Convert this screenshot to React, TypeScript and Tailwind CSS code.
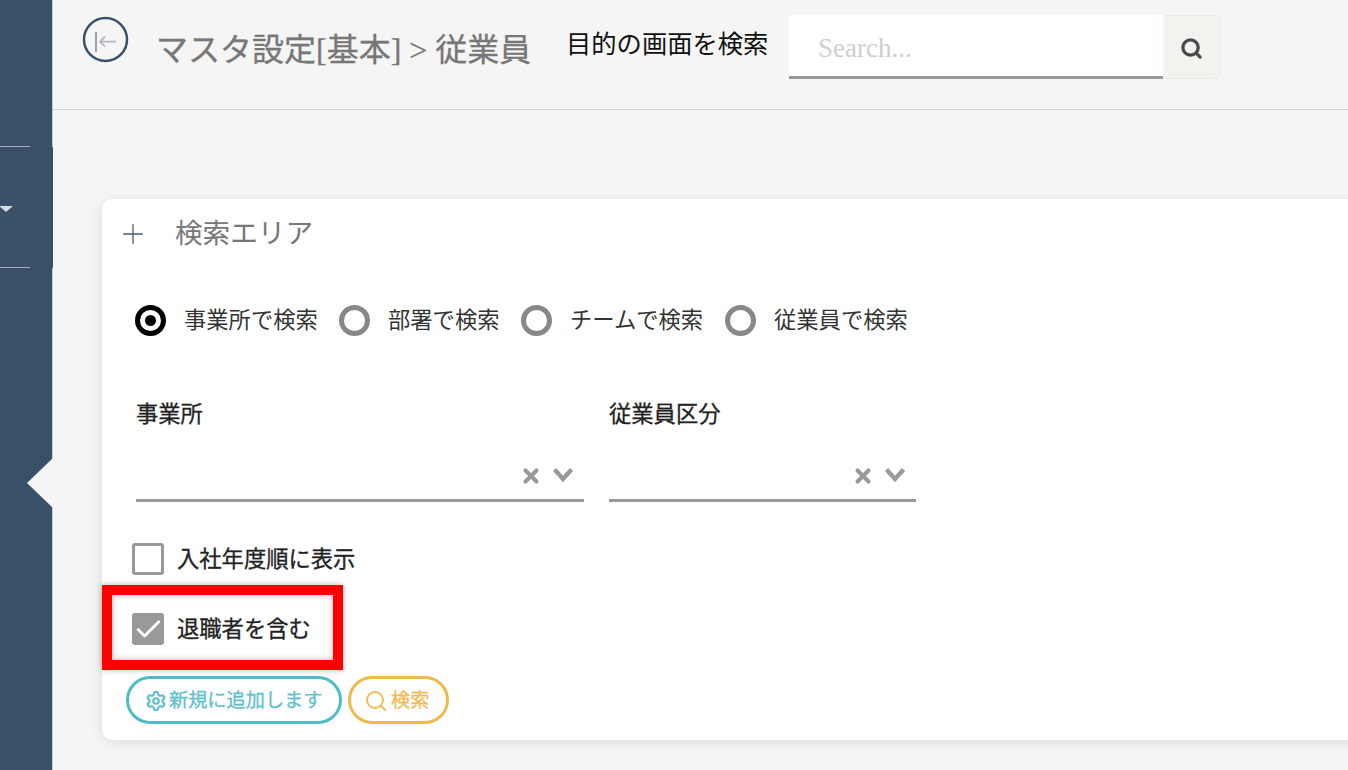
import { Check, Settings, Search, X, Plus } from "lucide-react";

const FONT = "font-['Liberation_Serif','Noto_Sans_CJK_JP',serif]";

const radios = [
  { label: "事業所で検索", checked: true, width: "w-[204px]" },
  { label: "部署で検索", checked: false, width: "w-[182px]" },
  { label: "チームで検索", checked: false, width: "w-[204px]" },
  { label: "従業員で検索", checked: false, width: "w-[204px]" },
];

function Radio({ label, checked, width }: { label: string; checked: boolean; width: string }) {
  return (
    <div className={`flex items-center gap-[18px] shrink-0 ${width}`}>
      <span
        className={`flex w-[31px] h-[31px] items-center justify-center rounded-full border-[5px] bg-white shrink-0 ${
          checked ? "border-black" : "border-[#888888]"
        }`}
      >
        {checked && <span className="w-[11px] h-[11px] rounded-full bg-black" />}
      </span>
      <span className="text-[22.3px] leading-none pt-[2px] text-[#333333] whitespace-nowrap">{label}</span>
    </div>
  );
}

function SelectField({ label, width }: { label: string; width: string }) {
  return (
    <div className={`${width} shrink-0`}>
      <div className="text-[22.3px] leading-[30px] text-[#222222] [-webkit-text-stroke:0.3px_#222222]">{label}</div>
      <div className="h-[72px] border-b-[3px] border-[#999999] flex items-end justify-end pb-[13px] pr-[10px] gap-[10px]">
        <X size={22} strokeWidth={4.5} className="text-[#999999] -mb-[1px]" />
        <svg width="22" height="16" viewBox="0 0 22 16" className="mb-[3px]">
          <path d="M2.5 2.5L11 12l8.5-9.5" fill="none" stroke="#999999" strokeWidth="4.4" />
        </svg>
      </div>
    </div>
  );
}

export default function App() {
  return (
    <div className={`${FONT} flex w-[1348px] h-[770px] overflow-hidden bg-[#f5f5f5]`}>
      {/* Sidebar */}
      <aside className="relative z-10 w-[53px] shrink-0 bg-[#3a5068] border-r border-[#c4c8cc]">
        <div className="h-[147px] border-b border-[#a3afbb] w-[30px]" />
        <div className="w-[53px] bg-[#3a5068]">
          <div className="h-[121px] border-b border-[#a3afbb] w-[30px] flex items-center">
            <span className="w-0 h-0 border-x-[7px] border-x-transparent border-t-[6px] border-t-[#d8dde2] -ml-[1px] mt-[4px]" />
          </div>
        </div>
        {/* notch */}
        <div className="absolute left-[27px] top-[458px] w-[26px] h-[50px] bg-[#f5f5f5] [clip-path:polygon(100%_0,0_50%,100%_100%)]" />
      </aside>

      <main className="relative flex-1 min-w-0">
        {/* Header */}
        <header className="h-[110px] border-b border-[#d2d2d2] flex items-start pl-[29px]">
          <svg width="47" height="47" viewBox="0 0 47 47" className="mt-[16px] shrink-0">
            <circle cx="23.5" cy="23.5" r="21.5" fill="none" stroke="#3a5068" strokeWidth="2.5" />
            <path d="M14 16v20" stroke="#5a6a80" strokeWidth="1.2" />
            <path d="M34 25.7H18M23 20.7l-5 5 5 5" fill="none" stroke="#b4b8bc" strokeWidth="1.8" />
          </svg>
          <h1 className="ml-[27px] mt-[30px] text-[32px] leading-[40px] text-[#777777] [-webkit-text-stroke:0.3px_#777777] whitespace-nowrap w-[410px] shrink-0">
            マスタ設定[基本] &gt; 従業員
          </h1>
          <span className="mt-[28px] text-[25.3px] leading-[32px] text-[#111111] whitespace-nowrap w-[223px] shrink-0">
            目的の画面を検索
          </span>
          <div className="mt-[15px] flex h-[64px]">
            <div className="w-[374px] bg-white border-b-[3px] border-[#999999] pl-[29px] flex items-center text-[27px] text-[#cfcfcf] pt-[6px]">
              Search...
            </div>
            <div className="w-[58px] bg-[#f3f2ee] border border-[#ebebe6] border-l-0 rounded-r-[6px] flex items-center justify-center">
              <Search size={23} strokeWidth={3.4} className="text-[#4a4a4a] mt-[2px]" />
            </div>
          </div>
        </header>

        {/* Search card */}
        <section className="absolute left-[49px] top-[199px] w-[1320px] h-[541px] bg-white rounded-[10px] shadow-[0_2px_14px_rgba(0,0,0,0.1)] pl-[33px] pt-[17px]">
          <div className="flex items-center h-[36px] -ml-[18px]">
            <Plus size={32} strokeWidth={1} className="text-[#4a5c72]" />
            <span className="ml-[26px] text-[27.6px] leading-none text-[#777777] whitespace-nowrap">検索エリア</span>
          </div>

          <div className="mt-[53px] flex">
            {radios.map((r) => (
              <Radio key={r.label} {...r} />
            ))}
          </div>

          <div className="mt-[64px] flex gap-[25px] pl-px">
            <SelectField label="事業所" width="w-[448px]" />
            <SelectField label="従業員区分" width="w-[307px]" />
          </div>

          <div className="mt-[41px] -ml-[3px] flex items-center gap-[13px] h-[32px]">
            <span className="w-[32px] h-[32px] rounded-[3px] border-[3px] border-[#999999] bg-white" />
            <span className="pt-[2px] text-[22.3px] leading-none text-[#222222] [-webkit-text-stroke:0.3px_#222222]">入社年度順に表示</span>
          </div>
          <div className="mt-[38px] -ml-[3px] flex items-center gap-[13px] h-[32px]">
            <span className="flex w-[32px] h-[32px] items-center justify-center rounded-[3px] bg-[#999999]">
              <Check size={31} strokeWidth={2.2} className="text-white" />
            </span>
            <span className="pt-[2px] text-[22.3px] leading-none text-[#222222] [-webkit-text-stroke:0.3px_#222222]">退職者を含む</span>
          </div>

          <div className="mt-[31px] -ml-[9px] flex gap-[6px]">
            <button className="flex items-center h-[48px] w-[216px] pl-[16px] rounded-full border-[3px] border-[#50bcc8] text-[19.2px] text-[#62bfcb] [-webkit-text-stroke:0.3px_#62bfcb] whitespace-nowrap">
              <Settings size={22} strokeWidth={2.4} className="mr-[2px] mt-[2px]" />
              <span className="pt-[2px]">新規に追加します</span>
            </button>
            <button className="flex items-center h-[48px] w-[101px] pl-[13px] rounded-full border-[3px] border-[#f0b94e] text-[19.2px] text-[#f1bb55] [-webkit-text-stroke:0.3px_#f1bb55] whitespace-nowrap">
              <Search size={24} strokeWidth={1.9} className="mr-[3px] mt-[2px]" />
              <span className="pt-[2px]">検索</span>
            </button>
          </div>
        </section>

        {/* Red highlight box */}
        <div className="absolute left-[49px] top-[585px] w-[241px] h-[85px] border-[10px] border-[#ff0000] shadow-[0_0_6px_rgba(0,0,0,0.3),inset_0_0_6px_rgba(0,0,0,0.3)]" />
      </main>
    </div>
  );
}
